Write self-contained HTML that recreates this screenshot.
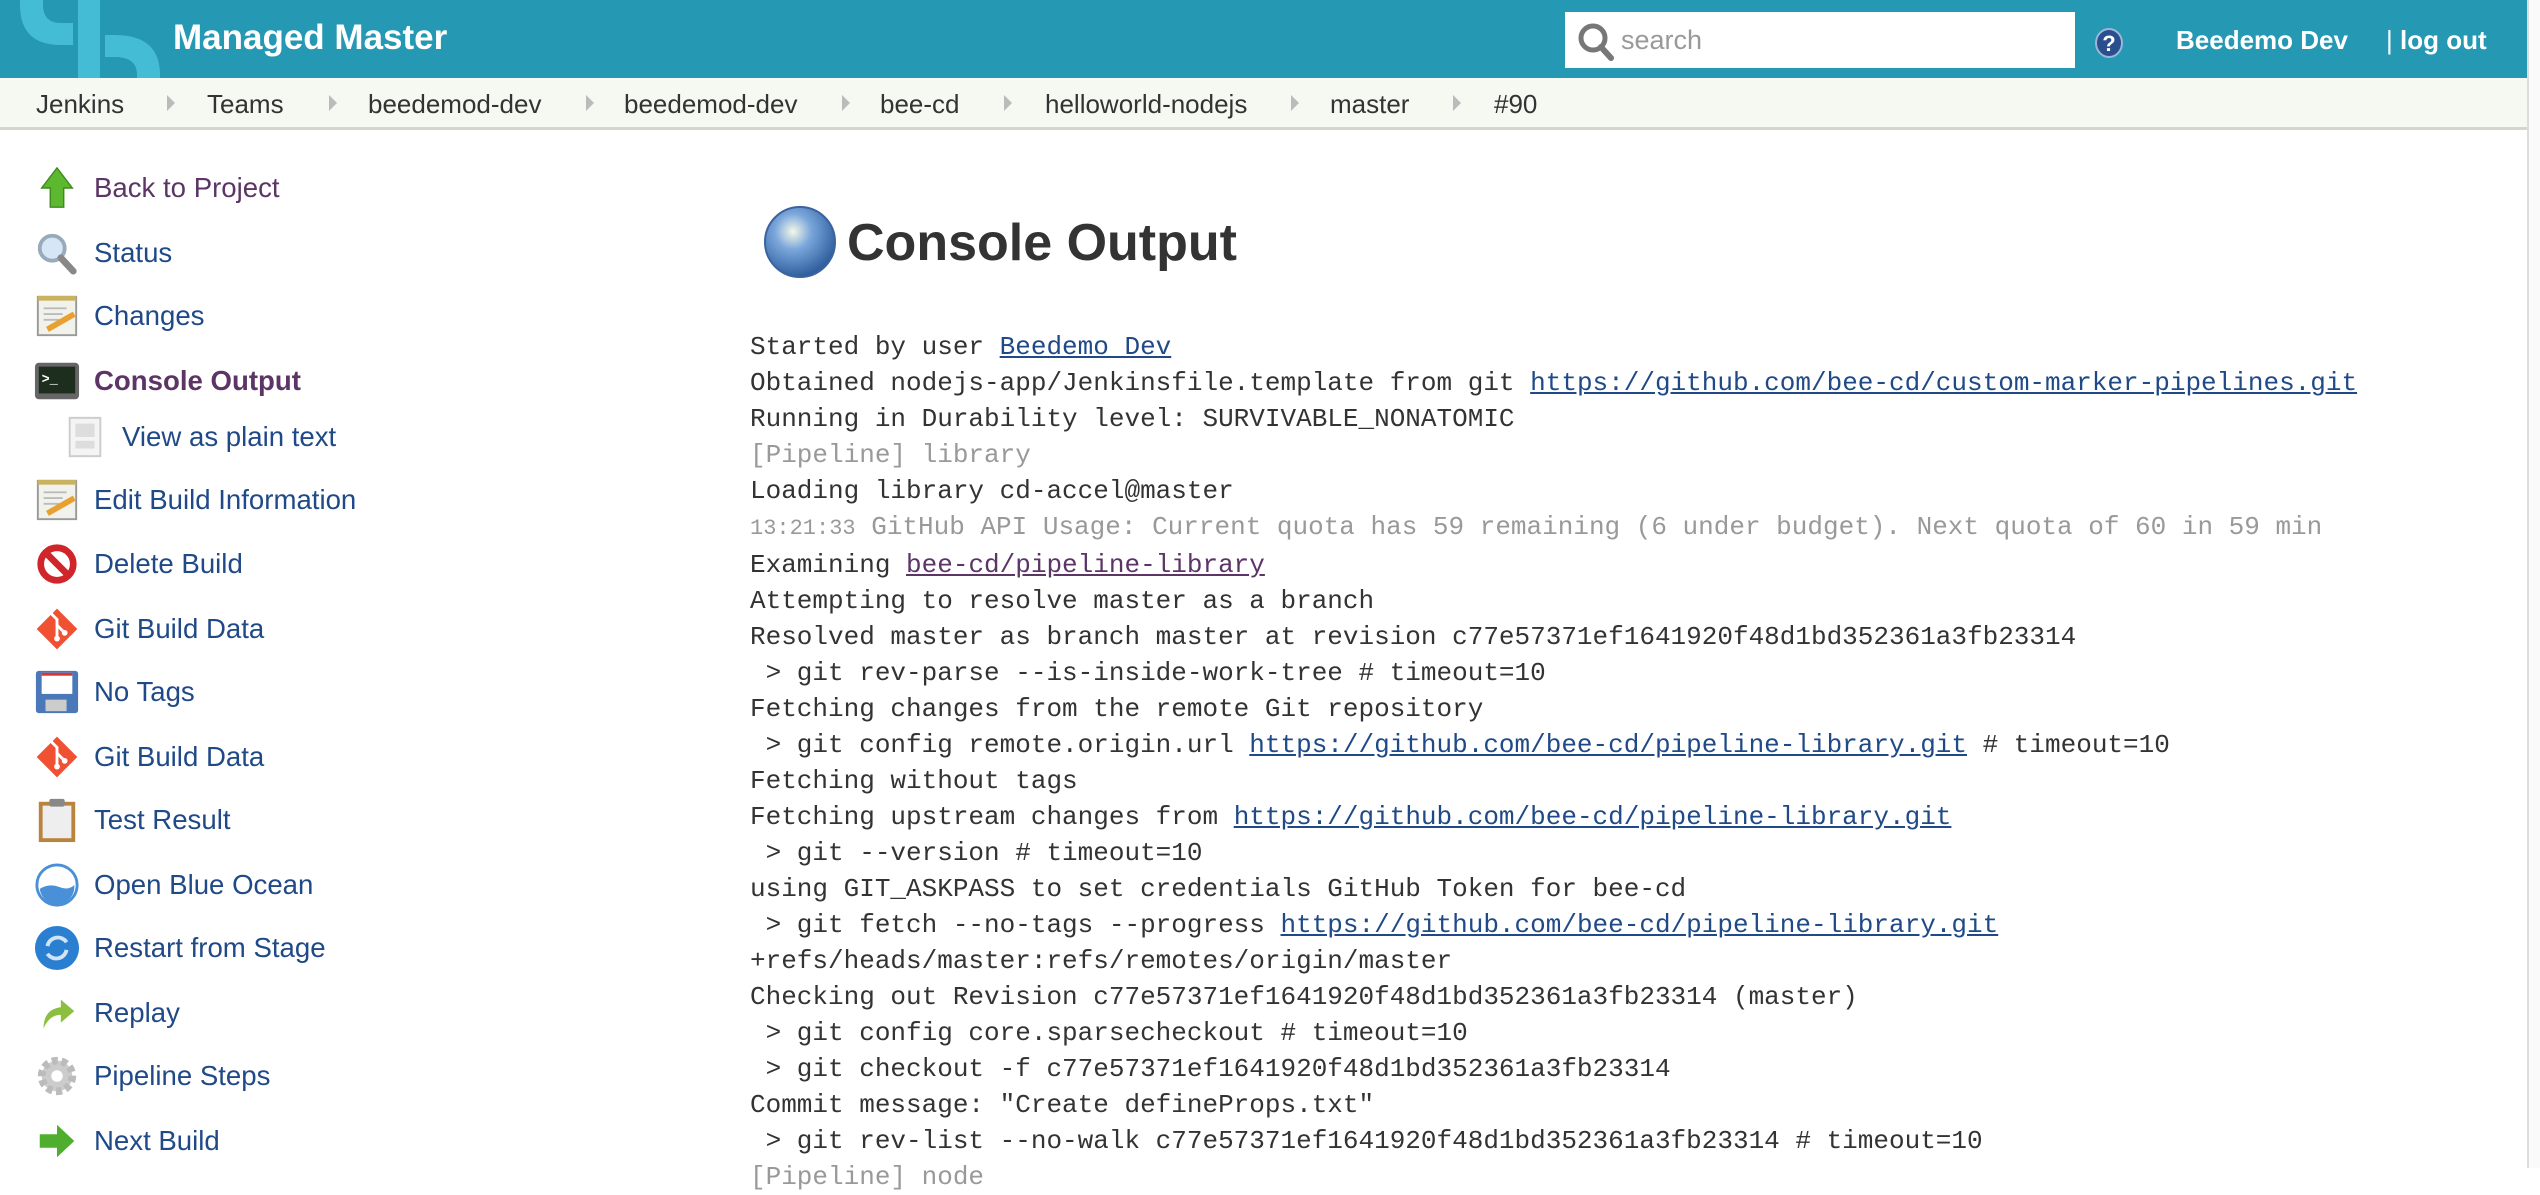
<!DOCTYPE html>
<html><head><meta charset="utf-8"><style>
*{margin:0;padding:0;box-sizing:border-box}
html,body{width:2540px;height:1168px;overflow:hidden;background:#fff;font-family:"Liberation Sans",sans-serif}
#hdr{position:absolute;left:0;top:0;width:2527px;height:78px;background:#2598b3;overflow:hidden}
#hdr .t{position:absolute;left:173px;top:18px;color:#fff;font-weight:bold;font-size:35px}
#search{position:absolute;left:1565px;top:12px;width:510px;height:56px;background:#fff}
#search span{position:absolute;left:56px;top:13px;font-size:27px;color:#999}
.hl{position:absolute;color:#fff;font-weight:bold;font-size:26px;top:25px}
#bc{position:absolute;left:0;top:78px;width:2527px;height:52px;background:#f6f8f2;border-bottom:3px solid #d3d7cf}
#bc span{position:absolute;top:11px;font-size:26px;color:#333}
#bc i{position:absolute;top:17px;width:0;height:0;border-left:8px solid #bbb;border-top:8px solid transparent;border-bottom:8px solid transparent}
#sb{position:absolute;right:0;top:0;width:13px;height:1168px;background:#fafafa;border-left:2px solid #ddd}
.it{position:absolute;left:34px;height:48px;display:flex;align-items:center;font-size:27.6px;color:#204a87}
.it svg{width:46px;height:46px;margin-right:14px;flex:none}
h1{position:absolute;left:761px;top:204px;font-size:52px;color:#333;display:flex;align-items:center}
h1 svg{margin-right:8px}
pre{position:absolute;left:750px;top:329px;font-family:"Liberation Mono",monospace;font-size:26px;line-height:36px;color:#333}
pre a{color:#204a87;text-decoration:underline}
pre a.v{color:#5c3566}
.g{color:#999}
.ts{font-size:22px}
</style></head><body>
<div id="hdr">
<svg style="position:absolute;left:0;top:0" width="170" height="78" viewBox="0 0 170 78"><g fill="#45bcd6"><path d="M20 0 H43 V5 Q43 23 61 23 H73 V45 H61 Q20 45 20 5 Z"/><rect x="78" y="0" width="22" height="78"/><path d="M105 35 H115 Q160 35 160 75 V78 H137 V75 Q137 57 115 57 H105 Z"/></g></svg>
<div class="t">Managed Master</div>
<div id="search"><svg style="position:absolute;left:12px;top:10px" width="38" height="40" viewBox="0 0 38 40"><circle cx="16" cy="16" r="12" fill="none" stroke="#777" stroke-width="5"/><path d="M24 25 l10 11" stroke="#777" stroke-width="6" stroke-linecap="round"/></svg><span>search</span></div>
<svg style="position:absolute;left:2094px;top:27px" width="30" height="32" viewBox="0 0 30 32"><ellipse cx="15" cy="16" rx="13" ry="14" fill="#2a4f8f" stroke="#9bb6d8" stroke-width="2"/><text x="15" y="24" text-anchor="middle" font-size="22" font-weight="bold" fill="#fff" font-family="Liberation Sans">?</text></svg>
<div class="hl" style="left:2176px">Beedemo Dev</div>
<div class="hl" style="left:2386px;font-weight:normal">|</div>
<div class="hl" style="left:2400px">log out</div>
</div>
<div id="bc">
<span style="left:36px">Jenkins</span><i style="left:167px"></i>
<span style="left:207px">Teams</span><i style="left:329px"></i>
<span style="left:368px">beedemod-dev</span><i style="left:586px"></i>
<span style="left:624px">beedemod-dev</span><i style="left:842px"></i>
<span style="left:880px">bee-cd</span><i style="left:1004px"></i>
<span style="left:1045px">helloworld-nodejs</span><i style="left:1291px"></i>
<span style="left:1330px">master</span><i style="left:1453px"></i>
<span style="left:1494px">#90</span>
</div>
<div id="sb"></div>

<div class="it" style="top:164px;color:#5c3566"><svg viewBox="0 0 48 48"><path d="M24 3 L40 24 H31 V44 H17 V24 H8 Z" fill="#5cb82e" stroke="#3f8a1e" stroke-width="1.5"/></svg>Back to Project</div>
<div class="it" style="top:229px"><svg viewBox="0 0 48 48"><circle cx="19" cy="19" r="13" fill="#d6e6f6" stroke="#9ab" stroke-width="4"/><path d="M28 29 L41 43" stroke="#888" stroke-width="7" stroke-linecap="round"/></svg>Status</div>
<div class="it" style="top:292px"><svg viewBox="0 0 48 48"><rect x="4" y="4" width="40" height="40" fill="#f2f2ec" stroke="#999" stroke-width="2"/><rect x="4" y="3" width="40" height="5" fill="#c8b460"/><path d="M10 16h24M10 22h20M10 28h16" stroke="#bbb" stroke-width="2"/><path d="M14 38 L42 22" stroke="#e8a030" stroke-width="6"/></svg>Changes</div>
<div class="it" style="top:357px;color:#5c3566;font-weight:bold"><svg viewBox="0 0 48 48"><rect x="1" y="5" width="46" height="38" rx="4" fill="#666"/><rect x="5" y="9" width="38" height="28" fill="#1e2e1e"/><text x="8" y="26" font-size="14" fill="#fff" font-family="Liberation Mono">&gt;_</text></svg>Console Output</div>
<div class="it" style="top:413px;left:62px"><svg viewBox="0 0 48 48"><rect x="8" y="4" width="32" height="40" fill="#f4f4f4" stroke="#ccc" stroke-width="2"/><rect x="14" y="10" width="20" height="14" fill="#ddd"/><rect x="14" y="28" width="20" height="8" fill="#ddd"/></svg>View as plain text</div>
<div class="it" style="top:476px"><svg viewBox="0 0 48 48"><rect x="4" y="4" width="40" height="40" fill="#f2f2ec" stroke="#999" stroke-width="2"/><rect x="4" y="3" width="40" height="5" fill="#c8b460"/><path d="M10 16h24M10 22h20M10 28h16" stroke="#bbb" stroke-width="2"/><path d="M14 38 L42 22" stroke="#e8a030" stroke-width="6"/></svg>Edit Build Information</div>
<div class="it" style="top:540px"><svg viewBox="0 0 48 48"><circle cx="24" cy="24" r="17" fill="#fff" stroke="#d0252a" stroke-width="7"/><path d="M12 12 L36 36" stroke="#d0252a" stroke-width="7"/></svg>Delete Build</div>
<div class="it" style="top:605px"><svg viewBox="0 0 48 48"><rect x="9" y="9" width="30" height="30" transform="rotate(45 24 24)" fill="#f05133"/><path d="M18 8 L24 14 V34 M24 20 L32 28" stroke="#fff" stroke-width="3" fill="none"/><circle cx="24" cy="34" r="3" fill="#fff"/><circle cx="32" cy="28" r="3" fill="#fff"/></svg>Git Build Data</div>
<div class="it" style="top:668px"><svg viewBox="0 0 48 48"><rect x="2" y="2" width="44" height="44" rx="3" fill="#4a78b8"/><rect x="8" y="4" width="32" height="22" fill="#fff"/><rect x="8" y="4" width="32" height="3" fill="#d33"/><rect x="12" y="32" width="22" height="12" fill="#ccc"/></svg>No Tags</div>
<div class="it" style="top:733px"><svg viewBox="0 0 48 48"><rect x="9" y="9" width="30" height="30" transform="rotate(45 24 24)" fill="#f05133"/><path d="M18 8 L24 14 V34 M24 20 L32 28" stroke="#fff" stroke-width="3" fill="none"/><circle cx="24" cy="34" r="3" fill="#fff"/><circle cx="32" cy="28" r="3" fill="#fff"/></svg>Git Build Data</div>
<div class="it" style="top:796px"><svg viewBox="0 0 48 48"><rect x="5" y="5" width="38" height="42" fill="#b8843e"/><rect x="9" y="9" width="30" height="34" fill="#eee"/><rect x="16" y="2" width="16" height="8" rx="2" fill="#888"/></svg>Test Result</div>
<div class="it" style="top:861px"><svg viewBox="0 0 48 48"><circle cx="24" cy="24" r="21" fill="#fff" stroke="#4a90d9" stroke-width="3"/><path d="M6 28 Q16 22 26 26 T42 24 A18 18 0 0 1 6 28 Z" fill="#4a90d9"/></svg>Open Blue Ocean</div>
<div class="it" style="top:924px"><svg viewBox="0 0 48 48"><circle cx="24" cy="24" r="23" fill="#2b7fd0"/><path d="M14 22 A11 11 0 0 1 34 18 M34 26 A11 11 0 0 1 14 30" stroke="#cfe4f8" stroke-width="4" fill="none"/></svg>Restart from Stage</div>
<div class="it" style="top:989px"><svg viewBox="0 0 48 48"><path d="M10 40 Q10 20 28 18 V10 L42 22 L28 34 V26 Q16 26 10 40 Z" fill="#8cbf3f"/></svg>Replay</div>
<div class="it" style="top:1052px"><svg viewBox="0 0 48 48"><circle cx="24" cy="24" r="16" fill="#ccc" stroke="#bbb" stroke-width="8" stroke-dasharray="6 4"/><circle cx="24" cy="24" r="6" fill="#fff"/></svg>Pipeline Steps</div>
<div class="it" style="top:1117px"><svg viewBox="0 0 48 48"><path d="M6 17 H24 V7 L42 24 L24 41 V31 H6 Z" fill="#4fae2e"/></svg>Next Build</div>

<h1><svg width="78" height="78" viewBox="0 0 78 78"><defs><radialGradient id="b" cx="0.4" cy="0.35" r="0.65"><stop offset="0" stop-color="#f4f8e8"/><stop offset="0.4" stop-color="#7aa6db"/><stop offset="1" stop-color="#2f5f9e"/></radialGradient></defs><circle cx="39" cy="38" r="35" fill="url(#b)" stroke="#3a63a0" stroke-width="2"/></svg>Console Output</h1>

<pre>Started by user <a>Beedemo Dev</a>
Obtained nodejs-app/Jenkinsfile.template from git <a>https://github.com/bee-cd/custom-marker-pipelines.git</a>
Running in Durability level: SURVIVABLE_NONATOMIC
<span class="g">[Pipeline] library</span>
Loading library cd-accel@master
<span class="g"><span class="ts">13:21:33</span> GitHub API Usage: Current quota has 59 remaining (6 under budget). Next quota of 60 in 59 min</span>
Examining <a class="v">bee-cd/pipeline-library</a>
Attempting to resolve master as a branch
Resolved master as branch master at revision c77e57371ef1641920f48d1bd352361a3fb23314
 &gt; git rev-parse --is-inside-work-tree # timeout=10
Fetching changes from the remote Git repository
 &gt; git config remote.origin.url <a>https://github.com/bee-cd/pipeline-library.git</a> # timeout=10
Fetching without tags
Fetching upstream changes from <a>https://github.com/bee-cd/pipeline-library.git</a>
 &gt; git --version # timeout=10
using GIT_ASKPASS to set credentials GitHub Token for bee-cd
 &gt; git fetch --no-tags --progress <a>https://github.com/bee-cd/pipeline-library.git</a>
+refs/heads/master:refs/remotes/origin/master
Checking out Revision c77e57371ef1641920f48d1bd352361a3fb23314 (master)
 &gt; git config core.sparsecheckout # timeout=10
 &gt; git checkout -f c77e57371ef1641920f48d1bd352361a3fb23314
Commit message: "Create defineProps.txt"
 &gt; git rev-list --no-walk c77e57371ef1641920f48d1bd352361a3fb23314 # timeout=10
<span class="g">[Pipeline] node</span></pre>
</body></html>
